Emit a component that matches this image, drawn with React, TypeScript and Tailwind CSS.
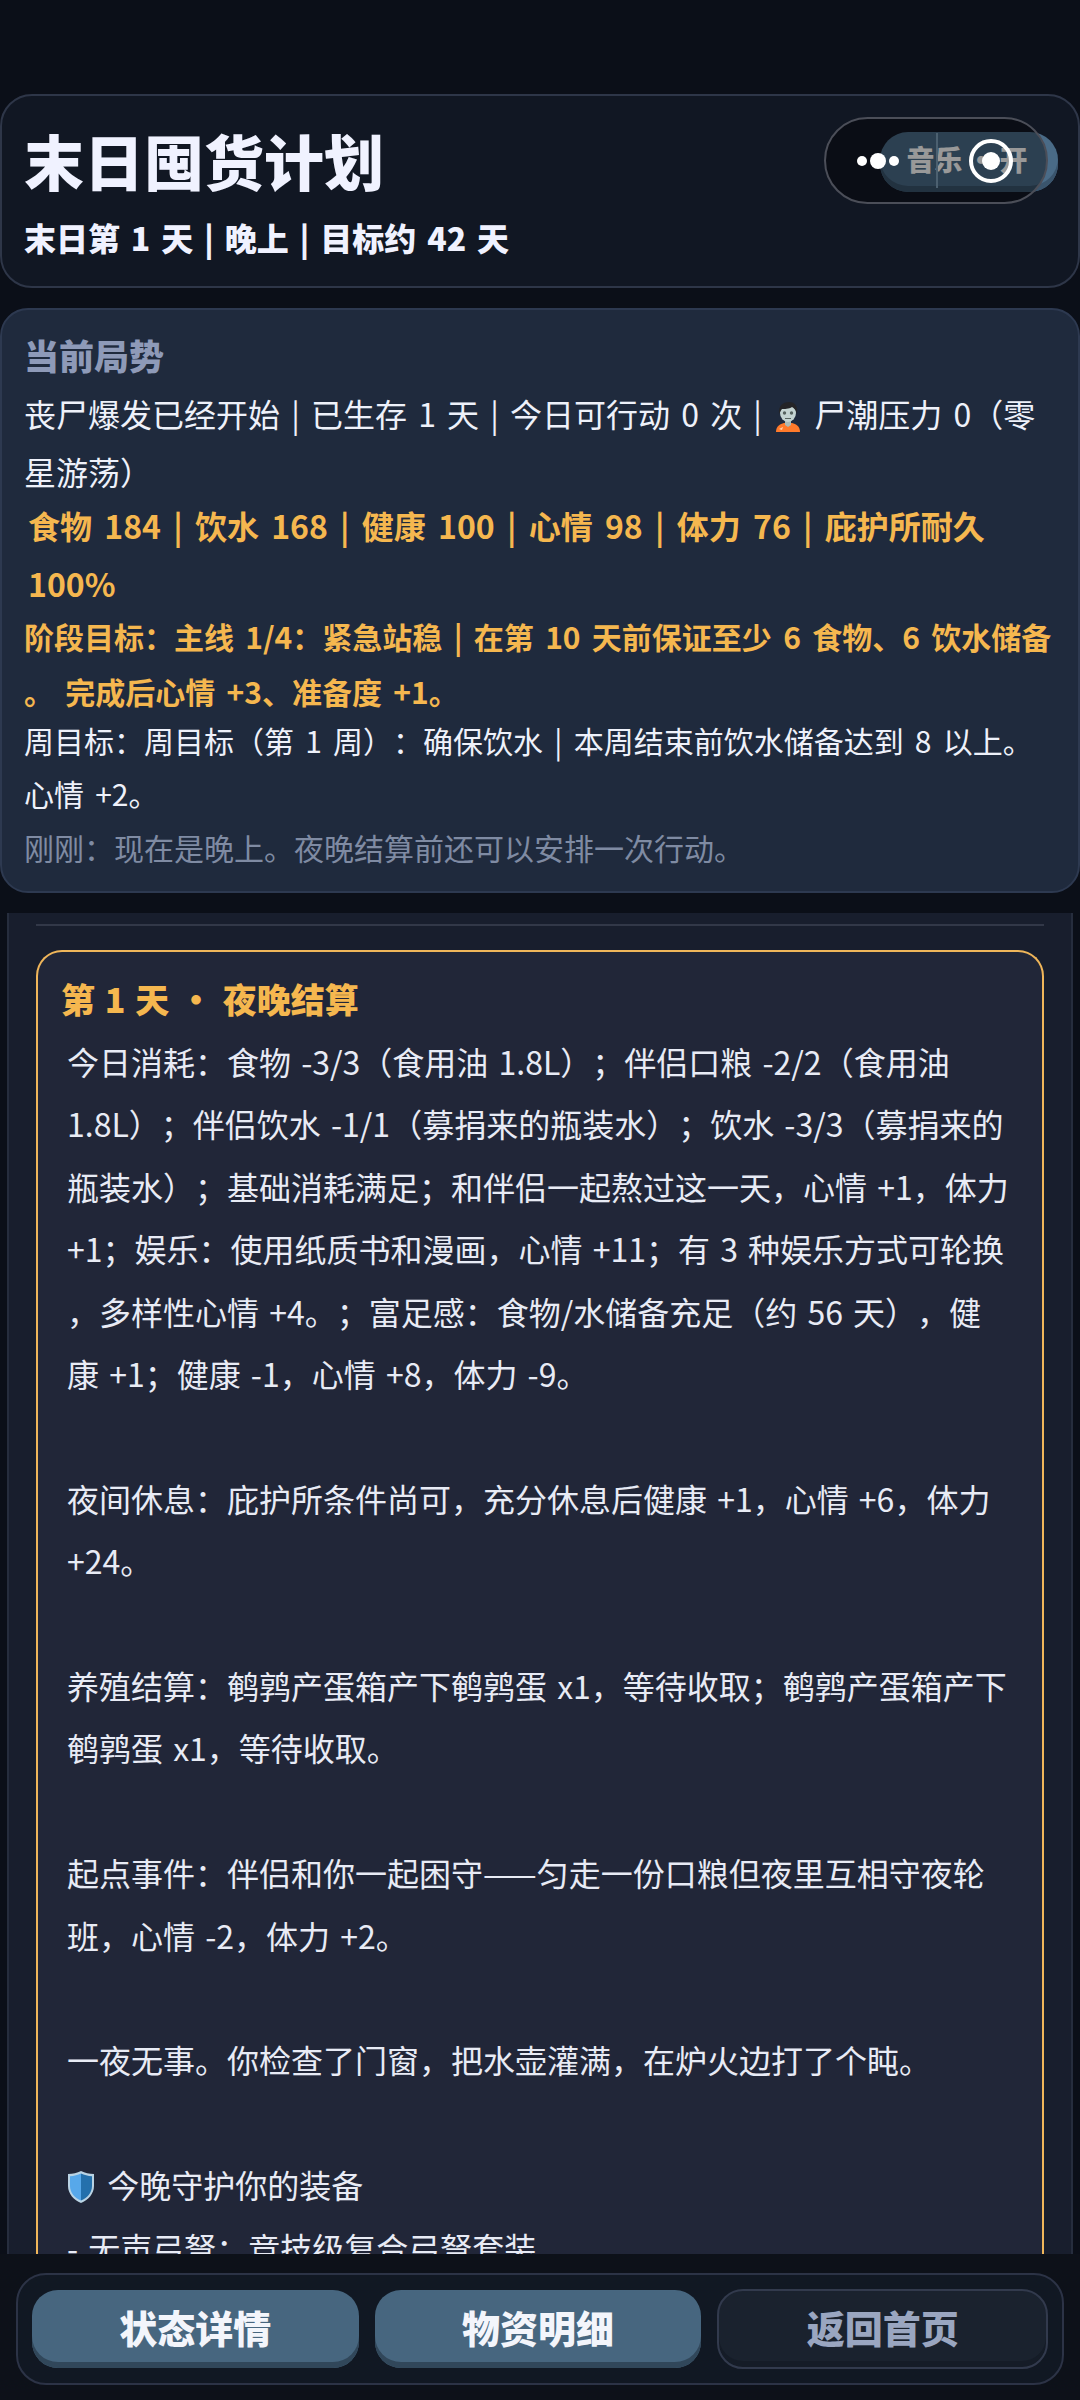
const FONT = "font-['Noto_Sans_CJK_SC','Noto_Sans',sans-serif]";

function ZombieIcon() {
  return (
    <svg viewBox="0 0 26 32" className="inline-block w-[26px] h-[32px] align-[-6px] mx-[2px]">
      <path d="M1 31c0-6 4-8 8-9h8c4 1 8 3 8 9z" fill="#ff7a2b" />
      <path d="M4 28l4-2-1 3z" fill="#ffd2ad" />
      <path d="M10 19h6v5l-3 2-3-2z" fill="#a9bab7" />
      <ellipse cx="13" cy="12" rx="8" ry="9" fill="#c3d3d1" />
      <path d="M4 13C3 5 8 1 14 1c6 0 9 4 8 12-1-4-3-6-5-7-3 2-8 2-10 2-1 1-2 3-3 5z" fill="#242427" />
      <circle cx="9.500" cy="12" r="1.700" fill="#55625f" />
      <circle cx="16.500" cy="12" r="1.700" fill="#55625f" />
      <path d="M10 17.500h6" stroke="#55625f" strokeWidth="1" />
    </svg>
  );
}

function ShieldIcon() {
  return (
    <svg viewBox="0 0 28 32" className="inline-block w-[28px] h-[32px] align-[-5px] mr-[2px]">
      <path d="M14 0c4 2 8 3 13 3v12c0 8-6 14-13 17C7 29 1 23 1 15V3c5 0 9-1 13-3z" fill="#b9d3e4" />
      <path d="M14 2.500c-3 1.500-7 2.500-11 2.700V15c0 7 5 12 11 14.500z" fill="#57a8ea" />
      <path d="M14 2.500c3 1.500 7 2.500 11 2.700V15c0 7-5 12-11 14.500z" fill="#2470ac" />
    </svg>
  );
}

function ActionButton({ label, primary }: { label: string; primary?: boolean }) {
  if (primary) {
    return (
      <button className="flex-1 h-[78px] rounded-[26px] bg-[#47667f] shadow-[inset_0_-6px_0_#31475a] pb-[6px] text-[38px] font-black text-[#f3f5fb]">
        {label}
      </button>
    );
  }
  return (
    <button className="flex-1 h-[80px] rounded-[26px] border-2 border-[#323a4d] bg-[#1a222e] shadow-[inset_0_-6px_0_#151c27] pb-[6px] text-[38px] font-black text-[#9aa6c0]">
      {label}
    </button>
  );
}

export default function App() {
  return (
    <div className={`${FONT} relative w-[1080px] h-[2400px] overflow-hidden flex flex-col bg-[#0b0f18] text-[#eef1fa] [text-spacing-trim:space-all]`}>
      <div className="pt-[94px] flex flex-col shrink-0">
        {/* header */}
        <div className="h-[194px] rounded-[32px] border-2 border-[#2e3648] bg-[#111723] px-[22px] pt-[20px] flex items-start justify-between">
          <div>
            <h1 className="text-[60px] font-black leading-[88px] text-[#f0f2ff]">末日囤货计划</h1>
            <p className="mt-[11px] text-[32px] font-black leading-[44px] text-[#f0f2ff] [word-spacing:3.500px] whitespace-nowrap">末日第 1 天 | 晚上 | 目标约 42 天</p>
          </div>
          <button className="mt-[16px] mr-[-2px] w-[178px] h-[60px] rounded-[28px] bg-[#4a6b87] shadow-[inset_0_-6px_0_#3a546c] pb-[7px] pr-[4px] text-[28px] font-black text-white whitespace-nowrap [word-spacing:-2px]">
            音乐 · 开
          </button>
        </div>

        {/* situation */}
        <div className="mt-[20px] h-[585px] rounded-[28px] border-2 border-[#2d3950] bg-[#1f2a3d] px-[22px] pt-[20px]">
          <h2 className="text-[35px] font-black leading-[50px] text-[#8e9ab8]">当前局势</h2>
          <p className="mt-[5px] text-[32px] leading-[57.6px] [word-spacing:4px] whitespace-nowrap">
            丧尸爆发已经开始 | 已生存 1 天 | 今日可行动 0 次 | <ZombieIcon /> 尸潮压力 0（零
            <br />
            星游荡）
          </p>
          <p className="-mt-[4px] px-[4px] text-[32px] font-bold leading-[58px] text-[#f5b74f] [word-spacing:5px] whitespace-nowrap">
            食物 184 | 饮水 168 | 健康 100 | 心情 98 | 体力 76 | 庇护所耐久
            <br />
            100%
          </p>
          <p className="-mt-[3px] text-[30px] font-bold leading-[55px] text-[#f5b74f] [word-spacing:4.500px] whitespace-nowrap">
            阶段目标：主线 1/4：紧急站稳 | 在第 10 天前保证至少 6 食物、6 饮水储备
            <br />
            。 完成后心情 +3、准备度 +1。
          </p>
          <p className="-mt-[5px] text-[30px] leading-[53px] [word-spacing:4.500px] whitespace-nowrap">
            周目标：周目标（第 1 周）：确保饮水 | 本周结束前饮水储备达到 8 以上。
            <br />
            心情 +2。
          </p>
          <p className="text-[30px] leading-[54px] text-[#7f8ba3]">刚刚：现在是晚上。夜晚结算前还可以安排一次行动。</p>
        </div>
      </div>

      {/* log */}
      <div className="mt-[20px] mx-[7px] flex-1 min-h-0 overflow-hidden border-x-2 border-[#262d3d] bg-[#181e2d] px-[27px] pt-[11px]">
        <div className="h-[2px] bg-[#323848]" />
        <div className="mt-[24px] rounded-t-[26px] border-x-2 border-t-2 border-[#f0b65a] bg-[#212638] px-[23px] pt-[18px] pb-[40px]">
          <h3 className="text-[34px] font-black leading-[58px] text-[#f5b74f] [word-spacing:2px]">第 1 天 · 夜晚结算</h3>
          <div className="px-[6px] mt-[2px] text-[32px] leading-[62.4px] text-[#e8ebf5] [word-spacing:3px] whitespace-nowrap">
            <p>
              今日消耗：食物 -3/3（食用油 1.8L）；伴侣口粮 -2/2（食用油
              <br />
              1.8L）；伴侣饮水 -1/1（募捐来的瓶装水）；饮水 -3/3（募捐来的
              <br />
              瓶装水）；基础消耗满足；和伴侣一起熬过这一天，心情 +1，体力
              <br />
              +1；娱乐：使用纸质书和漫画，心情 +11；有 3 种娱乐方式可轮换
              <br />
              ，多样性心情 +4。；富足感：食物/水储备充足（约 56 天），健
              <br />
              康 +1；健康 -1，心情 +8，体力 -9。
            </p>
            <p className="mt-[62.4px]">
              夜间休息：庇护所条件尚可，充分休息后健康 +1，心情 +6，体力
              <br />
              +24。
            </p>
            <p className="mt-[62.4px]">
              养殖结算：鹌鹑产蛋箱产下鹌鹑蛋 x1，等待收取；鹌鹑产蛋箱产下
              <br />
              鹌鹑蛋 x1，等待收取。
            </p>
            <p className="mt-[62.4px]">
              起点事件：伴侣和你一起困守——匀走一份口粮但夜里互相守夜轮
              <br />
              班，心情 -2，体力 +2。
            </p>
            <p className="mt-[62.4px]">一夜无事。你检查了门窗，把水壶灌满，在炉火边打了个盹。</p>
            <p className="mt-[62.4px]"><ShieldIcon /> 今晚守护你的装备</p>
            <p>- 无声弓弩：竞技级复合弓弩套装</p>
          </div>
        </div>
      </div>

      {/* bottom actions */}
      <div className="shrink-0 h-[146px] bg-[#0d1119] px-[16px] pt-[19px]">
        <div className="h-[112px] rounded-[30px] border-2 border-[#2c3346] bg-[#111823] flex items-center gap-[16px] px-[14px]">
          <ActionButton label="状态详情" primary />
          <ActionButton label="物资明细" primary />
          <ActionButton label="返回首页" />
        </div>
      </div>

      {/* system capsule over the page */}
      <div className="absolute left-[824px] top-[117px] w-[224px] h-[87px] rounded-full border-2 border-[#4b4e58] bg-black/40 flex items-center">
        <div className="absolute left-[31px] top-[34px] flex items-center gap-[3px]">
          <span className="w-[10px] h-[10px] rounded-full bg-white" />
          <span className="w-[16px] h-[16px] rounded-full bg-white" />
          <span className="w-[10px] h-[10px] rounded-full bg-white" />
        </div>
        <div className="absolute left-[110px] top-[14px] w-[2px] h-[55px] bg-[#4c6070]" />
        <div className="absolute left-[143px] top-[20px] w-[44px] h-[44px] rounded-full border-[4px] border-white flex items-center justify-center">
          <span className="w-[18px] h-[18px] rounded-full bg-white" />
        </div>
      </div>
    </div>
  );
}
